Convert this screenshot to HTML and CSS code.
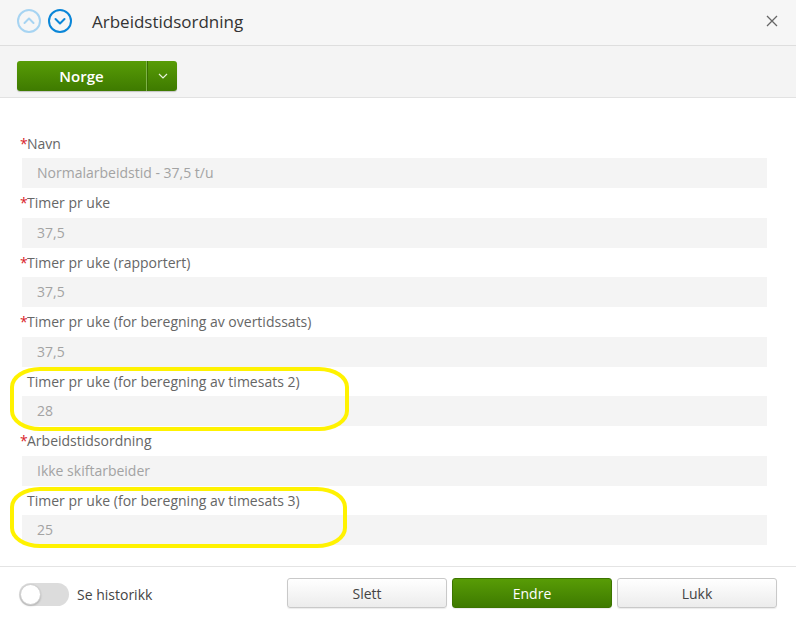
FILE: index.html
```html
<!DOCTYPE html>
<html lang="no">
<head>
<meta charset="utf-8">
<title>Arbeidstidsordning</title>
<link rel="stylesheet" href="styles.css">
</head>
<body>
<div class="modal">
  <header class="header">
    <div class="nav">
      <svg class="navicon" width="24" height="24" viewBox="0 0 24 24"><circle cx="12" cy="12" r="11" fill="none" stroke="#a7d4f2" stroke-width="2"/><path d="M7.5 14 L12 9.5 L16.5 14" fill="none" stroke="#a7d4f2" stroke-width="2" stroke-linecap="round" stroke-linejoin="round"/></svg>
      <svg class="navicon" width="24" height="24" viewBox="0 0 24 24"><circle cx="12" cy="12" r="11" fill="none" stroke="#0a86d8" stroke-width="2"/><path d="M7.5 10 L12 14.5 L16.5 10" fill="none" stroke="#0a86d8" stroke-width="2" stroke-linecap="round" stroke-linejoin="round"/></svg>
    </div>
    <h1 class="title">Arbeidstidsordning</h1>
    <svg class="close" width="12" height="12" viewBox="0 0 12 12"><path d="M1 1 L11 11 M11 1 L1 11" stroke="#666" stroke-width="1.3" fill="none"/></svg>
  </header>
  <div class="toolbar">
    <div class="split">
      <span class="split-main">Norge</span>
      <span class="split-toggle"><svg width="10" height="6" viewBox="0 0 10 6"><path d="M1 1 L5 5 L9 1" fill="none" stroke="#e8f2da" stroke-width="1.2"/></svg></span>
    </div>
  </div>
  <main class="form">
    <div class="group">
      <div class="label"><span class="req">*</span>Navn</div>
      <div class="input">Normalarbeidstid - 37,5 t/u</div>
    </div>
    <div class="group">
      <div class="label"><span class="req">*</span>Timer pr uke</div>
      <div class="input">37,5</div>
    </div>
    <div class="group">
      <div class="label"><span class="req">*</span>Timer pr uke (rapportert)</div>
      <div class="input">37,5</div>
    </div>
    <div class="group">
      <div class="label"><span class="req">*</span>Timer pr uke (for beregning av overtidssats)</div>
      <div class="input">37,5</div>
    </div>
    <div class="group marked">
      <div class="label">Timer pr uke (for beregning av timesats 2)</div>
      <div class="input">28</div>
    </div>
    <div class="group">
      <div class="label"><span class="req">*</span>Arbeidstidsordning</div>
      <div class="input">Ikke skiftarbeider</div>
    </div>
    <div class="group marked marked-2">
      <div class="label">Timer pr uke (for beregning av timesats 3)</div>
      <div class="input">25</div>
    </div>
  </main>
  <footer class="footer">
    <div class="history">
      <span class="switch"><span class="knob"></span></span>
      <span class="history-text">Se historikk</span>
    </div>
    <div class="actions">
      <button class="btn">Slett</button>
      <button class="btn btn-primary">Endre</button>
      <button class="btn">Lukk</button>
    </div>
  </footer>
</div>
</body>
</html>
```

FILE: styles.css
```css
*, *::before, *::after { box-sizing: border-box; }
html, body { margin: 0; padding: 0; }
body {
  width: 796px;
  height: 619px;
  overflow: hidden;
  background: #fff;
  font-family: "Open Sans", "Liberation Sans", sans-serif;
  color: #333;
}
.modal {
  display: flex;
  flex-direction: column;
  height: 619px;
}
.header {
  height: 46px;
  flex: none;
  background: #f6f6f6;
  border-bottom: 1px solid #dedede;
  display: flex;
  align-items: center;
  padding: 0 18px 1px 17px;
}
.nav {
  display: flex;
  gap: 7px;
  margin-top: -2px;
}
.navicon { display: block; }
.title {
  margin: 0 0 0 20px;
  font-size: 17px;
  font-weight: 400;
  color: #333;
  flex: 1;
  margin-top: -2px;
}
.close { display: block; margin-top: -2px; }
.toolbar {
  height: 52px;
  flex: none;
  background: #f4f4f4;
  border-bottom: 1px solid #e2e2e2;
  padding: 15px 17px 0;
}
.split {
  display: flex;
  width: 160px;
  height: 30px;
  border-radius: 3px;
  background: linear-gradient(#589c06, #3e7a00);
  box-shadow: 0 1px 1px rgba(0,0,0,0.2);
  color: #fff;
}
.split-main {
  width: 130px;
  display: flex;
  align-items: center;
  justify-content: center;
  font-size: 15px;
  font-weight: 600;
  border-right: 1px solid #7fb24a;
}
.split-toggle {
  flex: 1;
  display: flex;
  align-items: center;
  justify-content: center;
  border-left: 1px solid #3a6f00;
}
.split-toggle svg { display: block; }
.form {
  flex: 1;
  padding: 30.5px 29px 0 20px;
}
.group { position: relative; }
.label {
  height: 29.5px;
  line-height: 29.5px;
  padding-left: 7px;
  font-size: 14px;
  color: #666;
  white-space: nowrap;
}
.req {
  color: #d9232a;
  display: inline-block;
  width: 7px;
  margin-left: -7px;
}
.input {
  height: 30px;
  line-height: 30px;
  margin-left: 2px;
  padding-left: 15px;
  background: #f4f4f4;
  font-size: 14px;
  color: #a3a3a3;
}
.marked::after {
  content: "";
  position: absolute;
  left: -10px;
  top: 0;
  width: 339px;
  height: 64px;
  border: 4px solid #fff200;
  border-radius: 30px / 20px;
  pointer-events: none;
}
.marked-2::after {
  top: 1px;
  width: 337px;
  height: 61px;
}
.footer {
  height: 53px;
  flex: none;
  border-top: 1px solid #e4e4e4;
  display: flex;
  align-items: flex-start;
  justify-content: space-between;
  padding: 11px 19px 0 19px;
}
.history {
  display: flex;
  align-items: center;
  gap: 8px;
  height: 30px;
  margin-top: 1px;
}
.switch {
  width: 50px;
  height: 23px;
  border-radius: 12px;
  background: #dcdcdc;
  position: relative;
  display: block;
}
.knob {
  position: absolute;
  left: 1px;
  top: 1px;
  width: 21px;
  height: 21px;
  border-radius: 50%;
  background: #fff;
  border: 1px solid #cfcfcf;
  box-shadow: 0 1px 2px rgba(0,0,0,0.2);
}
.history-text {
  font-size: 14px;
  color: #444;
}
.actions {
  display: flex;
  gap: 5px;
}
.btn {
  width: 160px;
  height: 30px;
  border: 1px solid #c9c9c9;
  border-radius: 3px;
  background: linear-gradient(#ffffff, #ececec);
  font-family: "Open Sans", "Liberation Sans", sans-serif;
  font-size: 14px;
  color: #444;
  padding: 0;
  box-shadow: 0 1px 1px rgba(0,0,0,0.08);
}
.btn-primary {
  border-color: #3c7400;
  background: linear-gradient(#589c06, #3e7a00);
  color: #fff;
}
```
